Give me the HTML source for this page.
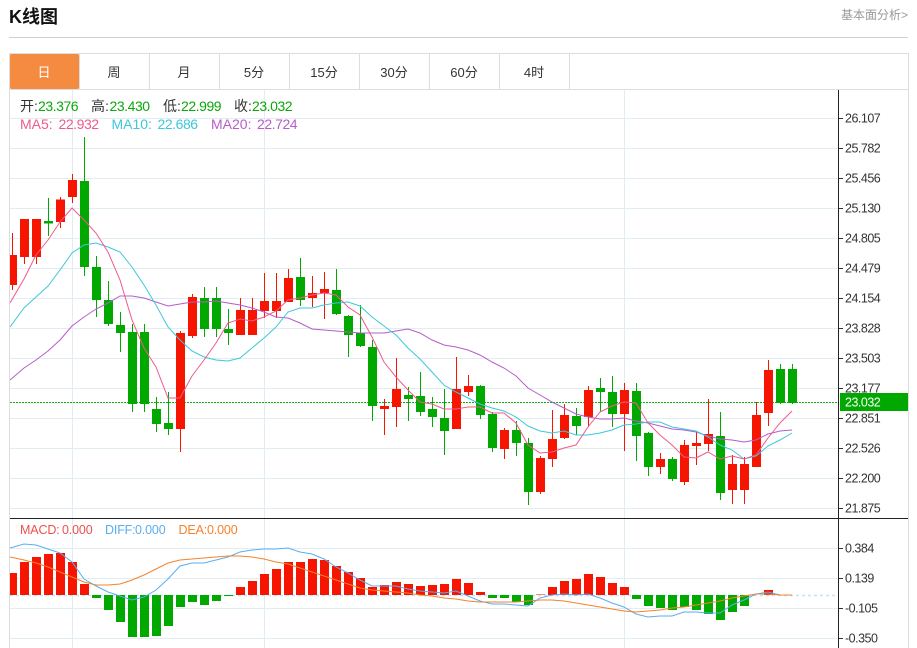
<!DOCTYPE html>
<html lang="zh">
<head>
<meta charset="utf-8">
<title>K线图</title>
<style>
html,body{margin:0;padding:0;background:#fff;width:917px;height:648px;overflow:hidden}
svg{display:block;position:absolute;left:0;top:0}
text{font-family:"Liberation Sans","Noto Sans CJK SC",sans-serif;font-size:14px}
.ax{font-size:12.5px;letter-spacing:-.5px;fill:#333}
.tab{font-size:13px;fill:#333;text-anchor:middle}
.g{fill:#0aa80a}
.k{fill:#333}
.v{letter-spacing:-.45px}
.m{font-size:12.5px;letter-spacing:-.15px}
</style>
</head>
<body>
<svg width="917" height="648" viewBox="0 0 917 648" xmlns="http://www.w3.org/2000/svg">
<defs><clipPath id="c"><rect x="10" y="90" width="828" height="558"/></clipPath></defs>

<text x="9" y="23" style="font-size:18px;font-weight:bold" fill="#111">K线图</text>
<text x="908" y="19" style="font-size:12px" fill="#999" text-anchor="end">基本面分析&gt;</text>
<path d="M9 37.5H908" stroke="#d0d0d0" fill="none"/>

<!-- frame and tabs -->
<path d="M9.5 648V53.5H908.5V648M9.5 89.5H908.5M79.5 54V89M149.5 54V89M219.5 54V89M289.5 54V89M359.5 54V89M429.5 54V89M499.5 54V89M569.5 54V89" stroke="#ddd" fill="none"/>
<rect x="10" y="54" width="69" height="35" rx="1.5" fill="#f58b41"/>
<text class="tab" x="44" y="77" style="fill:#fff">日</text>
<text class="tab" x="114" y="77">周</text>
<text class="tab" x="184" y="77">月</text>
<text class="tab" x="254" y="77">5分</text>
<text class="tab" x="324" y="77">15分</text>
<text class="tab" x="394" y="77">30分</text>
<text class="tab" x="464" y="77">60分</text>
<text class="tab" x="534" y="77">4时</text>

<!-- grid -->
<path d="M10 118.500H838M10 148.500H838M10 178.500H838M10 208.500H838M10 238.500H838M10 268.500H838M10 298.500H838M10 328.500H838M10 358.500H838M10 388.500H838M10 418.500H838M10 448.500H838M10 478.500H838M10 508.500H838M10 548.500H838M10 578.500H838M10 608.500H838M10 638.500H838M72.500 90V648M264.500 90V648M624.500 90V648" stroke="#e2edf3" fill="none"/>

<g clip-path="url(#c)">
<!-- dotted price line -->
<path d="M10 402.500H838" stroke="#0fae0f" stroke-dasharray="2 1" fill="none"/>

<!-- red wicks -->
<path stroke="#f51500" fill="none" d="M12.5 233V290M24.5 219V264M36.5 219V264M60.5 197V228M72.5 174V203M180.5 331V452M192.5 294V338M240.5 298V335M252.5 298V335M264.500 273V318M276.5 273V318M288.5 269V302M312.5 276V307M324.5 272V319M384.5 399V435M396.5 358V427M456.5 357V429M468.5 375V396M504.5 428V459M540.5 456V494M552.5 410V467M564.5 404V439M588.5 386V427M624.5 383V451M660.5 453V474M684.5 440V485M696.5 432V465M708.5 399V451M732.5 455V504M744.5 457V504M756.5 402V467M768.5 360V426"/>
<!-- green wicks -->
<path stroke="#00a800" fill="none" d="M48.5 198V236M84.5 137V276M96.5 256V317M108.5 281V326M120.5 312V352M132.5 324V412M144.5 324V412M156.5 397V432M168.5 392V435M204.5 287V337M216.5 287V337M228.5 309V345M300.5 258V306M336.5 269V315M348.5 315V357M360.5 305V347M372.5 340V421M408.5 387V421M420.5 372V416M432.5 397V427M444.5 389V455M480.5 385V419M492.5 412V452M516.5 421V456M528.5 438V505M576.5 408V435M600.5 378V412M612.5 376V427M636.5 383V461M648.5 432V476M672.5 457V481M720.5 412V500M780.5 364V404M792.5 364V404"/>
<!-- red bodies -->
<path fill="#f51500" d="M8 255h9V285h-9zM20 219h9V257h-9zM32 219h9V257h-9zM56 199.500h9V222h-9zM68 180h9V197h-9zM176 333h9V429h-9zM188 297h9V336h-9zM236 310h9V335h-9zM248 310h9V335h-9zM260 301h9V311h-9zM272 301h9V311h-9zM284 278h9V302h-9zM308 293h9V298h-9zM320 289h9V293h-9zM380 406h9V409h-9zM392 389h9V407h-9zM452 389h9V429h-9zM464 386h9V392h-9zM500 430h9V449h-9zM536 458h9V492h-9zM548 439h9V459h-9zM560 415h9V438h-9zM584 390h9V417h-9zM620 390h9V414h-9zM656 459h9V467h-9zM680 445h9V482h-9zM692 443h9V446h-9zM704 434h9V444h-9zM728 464h9V490h-9zM740 464h9V490h-9zM752 415h9V467h-9zM764 370h9V413h-9z"/>
<!-- green bodies -->
<path fill="#00a800" d="M44 221h9V223.500h-9zM80 181h9V267h-9zM92 267h9V300h-9zM104 300h9V324h-9zM116 325h9V333h-9zM128 332h9V404h-9zM140 332h9V404h-9zM152 409h9V424h-9zM164 423h9V429h-9zM200 298h9V329h-9zM212 298h9V329h-9zM224 329h9V333h-9zM296 277h9V300h-9zM332 290h9V314h-9zM344 316h9V335h-9zM356 333h9V346h-9zM368 347h9V406h-9zM404 395h9V399h-9zM416 396h9V412h-9zM428 409h9V417h-9zM440 418h9V431h-9zM476 386h9V415h-9zM488 414h9V448h-9zM512 430h9V443h-9zM524 443h9V492h-9zM572 416h9V426h-9zM596 388h9V392h-9zM608 392h9V414h-9zM632 391h9V436h-9zM644 433h9V467h-9zM668 459h9V479h-9zM716 436h9V493h-9zM776 369h9V403h-9zM788 369h9V403h-9z"/>

<!-- MA20 -->
<polyline fill="none" stroke="#b75ccb" points="10,380 24,368 36,360 48,351 60,340 72,326 84,317 96,309 108,303 120,296 132,296 144,298 156,302 168,306 180,304 192,302 204,302 216,301 228,303 240,305 252,308 264,312 276,317 288,318 300,323 312,329 324,330 336,331 348,332 360,333 372,333 384,333 396,331 408,329 420,333 432,340 444,345 456,347 468,350 480,355 492,362 504,368 516,376 528,388 540,395 552,402 564,408 576,414 588,417 600,419 612,419 624,418 636,421 648,423 660,426 672,429 684,430 696,432 708,436 720,439 732,440 744,442 756,440 768,434 780,431 792,430"/>
<!-- MA10 -->
<polyline fill="none" stroke="#3cc8dc" points="10,327 24,308 36,297 48,286 60,270 72,253 84,245 96,243 108,247 120,252 132,267 144,285 156,305 168,327 180,340 192,351 204,357 216,360 228,361 240,358 252,348 264,338 276,327 288,312 300,308 312,308 324,305 336,303 348,302 360,306 372,317 384,326 396,335 408,348 420,359 432,372 444,385 456,392 468,398 480,404 492,408 504,411 516,417 528,426 540,431 552,433 564,431 576,435 588,435 600,433 612,430 624,425 636,424 648,422 660,422 672,427 684,429 696,431 708,437 720,445 732,450 744,459 756,456 768,446 780,440 792,433"/>
<!-- MA5 -->
<polyline fill="none" stroke="#ef5a8e" points="10,303 24,279 36,255 48,240 60,222 72,208 84,220 96,233 108,252 120,280 132,320 144,348 156,367 168,398 180,398 192,376 204,360 216,343 228,323 240,319 252,321 264,317 276,311 288,300 300,298 312,295 324,293 336,295 348,307 360,315 372,337 384,362 396,377 408,390 420,402 432,404 444,409 456,409 468,407 480,407 492,413 504,413 516,423 528,445 540,453 552,452 564,448 576,445 588,427 600,412 612,406 624,402 636,403 648,423 660,435 672,445 684,457 696,458 708,452 720,459 732,456 744,459 756,455 768,438 780,423 792,411"/>

<!-- MACD zero -->
<path d="M10 595.500H836" stroke="#c5e3f0" stroke-width="1.500" stroke-dasharray="3 3" fill="none"/>
<!-- MACD red bars -->
<path fill="#f51500" d="M8 573h9V595h-9zM20 562h9V595h-9zM32 557h9V595h-9zM44 554h9V595h-9zM56 553h9V595h-9zM68 562h9V595h-9zM80 584h9V595h-9zM236 587h9V595h-9zM248 581h9V595h-9zM260 574h9V595h-9zM272 569h9V595h-9zM284 562h9V595h-9zM296 562h9V595h-9zM308 559h9V595h-9zM320 560h9V595h-9zM332 566h9V595h-9zM344 572h9V595h-9zM356 578h9V595h-9zM368 587h9V595h-9zM380 585h9V595h-9zM392 582h9V595h-9zM404 584h9V595h-9zM416 586h9V595h-9zM428 585h9V595h-9zM440 584h9V595h-9zM452 579h9V595h-9zM464 583h9V595h-9zM476 592h9V595h-9zM536 594.500h9V595h-9zM548 587h9V595h-9zM560 581h9V595h-9zM572 579h9V595h-9zM584 574h9V595h-9zM596 577h9V595h-9zM608 583h9V595h-9zM620 587h9V595h-9zM764 590h9V595h-9z"/>
<!-- MACD green bars -->
<path fill="#00a800" d="M92 595h9V598h-9zM104 595h9V610h-9zM116 595h9V622h-9zM128 595h9V637h-9zM140 595h9V637h-9zM152 595h9V636h-9zM164 595h9V626h-9zM176 595h9V607h-9zM188 595h9V602h-9zM200 595h9V605h-9zM212 595h9V601h-9zM224 595h9V596h-9zM488 595h9V598h-9zM500 595h9V598h-9zM512 595h9V602h-9zM524 595h9V605h-9zM632 595h9V599h-9zM644 595h9V606h-9zM656 595h9V608h-9zM668 595h9V610h-9zM680 595h9V607h-9zM692 595h9V610h-9zM704 595h9V614h-9zM716 595h9V620h-9zM728 595h9V612h-9zM740 595h9V606h-9z"/>
<!-- DIFF -->
<polyline fill="none" stroke="#5aaef0" points="10,548 24,544 36,545 48,549 60,553 72,562 84,579 96,586 108,592 120,596 132,600 144,597 156,590 168,579 180,566 192,563 204,563 216,560 228,557 240,552 252,550 264,549 276,549 288,548 300,552 312,554 324,559 336,567 348,573 360,580 372,586 384,586 396,586 408,589 420,591 432,592 444,593 456,591 468,596 480,601 492,604 504,604 516,605 528,606 540,598 552,595 564,594 576,595 588,594 600,598 612,603 624,607 636,614 648,617 660,616 672,616 684,612 696,612 708,613 720,613 732,605 744,600 756,594 768,592 780,595 792,595"/>
<!-- DEA -->
<polyline fill="none" stroke="#f5822d" points="10,557 24,560 36,563 48,567 60,572 72,577 84,582 96,585 108,585 120,584 132,580 144,575 156,569 168,563 180,560 192,559 204,558 216,557 228,556 240,556 252,557 264,559 276,562 288,564 300,568 312,572 324,576 336,580 348,584 360,588 372,590 384,591 396,592 408,593 420,595 432,596 444,598 456,599 468,601 480,602 492,602 504,602 516,602 528,601 540,600 552,600 564,601 576,603 588,605 600,607 612,609 624,611 636,612 648,611 660,610 672,608 684,607 696,605 708,603 720,601 732,598 744,596 756,594 768,594 780,595 792,595"/>
</g>

<!-- axes -->
<path d="M838.500 90V648M10 518.500H908" stroke="#222" fill="none"/>
<path d="M839 118.500h4M839 148.500h4M839 178.500h4M839 208.500h4M839 238.500h4M839 268.500h4M839 298.500h4M839 328.500h4M839 358.500h4M839 388.500h4M839 418.500h4M839 448.500h4M839 478.500h4M839 508.500h4M839 548.500h4M839 578.500h4M839 608.500h4M839 638.500h4" stroke="#333" fill="none"/>

<text class="ax" x="845" y="122.500">26.107</text>
<text class="ax" x="845" y="152.500">25.782</text>
<text class="ax" x="845" y="182.500">25.456</text>
<text class="ax" x="845" y="212.500">25.130</text>
<text class="ax" x="845" y="242.500">24.805</text>
<text class="ax" x="845" y="272.500">24.479</text>
<text class="ax" x="845" y="302.500">24.154</text>
<text class="ax" x="845" y="332.500">23.828</text>
<text class="ax" x="845" y="362.500">23.503</text>
<text class="ax" x="845" y="392.500">23.177</text>
<text class="ax" x="845" y="422.500">22.851</text>
<text class="ax" x="845" y="452.500">22.526</text>
<text class="ax" x="845" y="482.500">22.200</text>
<text class="ax" x="845" y="512.500">21.875</text>
<text class="ax" x="845" y="552.500">0.384</text>
<text class="ax" x="845" y="582.500">0.139</text>
<text class="ax" x="845" y="612.500">-0.105</text>
<text class="ax" x="845" y="642.500">-0.350</text>

<rect x="840" y="393" width="68" height="18" fill="#00a800"/>
<text class="ax" x="845" y="406.500" style="fill:#fff">23.032</text>

<!-- legends -->
<text class="k" x="20" y="111">开:</text><text class="g v" x="38" y="111">23.376</text>
<text class="k" x="91" y="111">高:</text><text class="g v" x="109.500" y="111">23.430</text>
<text class="k" x="163" y="111">低:</text><text class="g v" x="181" y="111">22.999</text>
<text class="k" x="234" y="111">收:</text><text class="g v" x="252" y="111">23.032</text>

<text fill="#ef5a8e" x="20" y="129">MA5:</text><text class="v" fill="#ef5a8e" x="58.500" y="129">22.932</text>
<text fill="#3cc8dc" x="111.500" y="129">MA10:</text><text class="v" fill="#3cc8dc" x="157.500" y="129">22.686</text>
<text fill="#b75ccb" x="211" y="129">MA20:</text><text class="v" fill="#b75ccb" x="257" y="129">22.724</text>

<text class="m" fill="#f0504a" x="20" y="534">MACD:</text><text class="m" fill="#f0504a" x="62" y="534">0.000</text>
<text class="m" fill="#5aaef0" x="105" y="534">DIFF:</text><text class="m" fill="#5aaef0" x="135" y="534">0.000</text>
<text class="m" fill="#f5822d" x="178.500" y="534">DEA:</text><text class="m" fill="#f5822d" x="207" y="534">0.000</text>
</svg>
</body>
</html>
